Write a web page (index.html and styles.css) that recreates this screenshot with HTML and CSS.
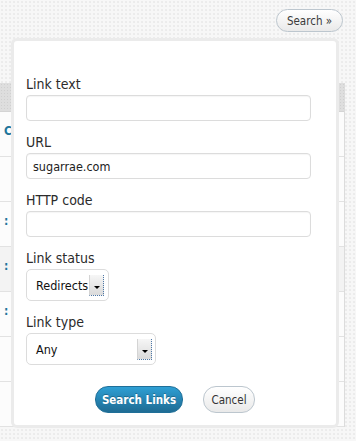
FILE: index.html
```html
<!DOCTYPE html>
<html>
<head>
<meta charset="utf-8">
<link rel="stylesheet" href="styles.css">
</head>
<body>
<div class="page">
  <div class="topbar">
    <button class="btn btn-light search-toggle" type="button">Search »</button>
  </div>
  <div class="links">
    <div class="links-head"></div>
    <div class="row"><span class="cell">C</span></div>
    <div class="row"><span class="cell"></span></div>
    <div class="row"><span class="cell">:</span></div>
    <div class="row row-alt"><span class="cell">: 2</span></div>
    <div class="row"><span class="cell">:</span></div>
    <div class="row"><span class="cell"></span></div>
    <div class="row"><span class="cell"></span></div>
  </div>

  <form class="popup">
    <div class="field">
      <label class="label">Link text</label>
      <input class="input" type="text" value="">
    </div>
    <div class="field">
      <label class="label">URL</label>
      <input class="input" type="text" value="sugarrae.com">
    </div>
    <div class="field">
      <label class="label">HTTP code</label>
      <input class="input" type="text" value="">
    </div>
    <div class="field">
      <label class="label">Link status</label>
      <div class="select select-status"><span class="select-text">Redirects</span><span class="arrow"><span class="tri"></span></span></div>
    </div>
    <div class="field field-last">
      <label class="label">Link type</label>
      <div class="select select-type"><span class="select-text">Any</span><span class="arrow"><span class="tri"></span></span></div>
    </div>
    <div class="actions">
      <button class="btn btn-primary" type="button">Search Links</button>
      <button class="btn btn-light btn-cancel" type="button">Cancel</button>
    </div>
  </form>
</div>
</body>
</html>
```

FILE: styles.css
```css
* { box-sizing: border-box; }

html, body {
  margin: 0;
  padding: 0;
}

body {
  width: 356px;
  height: 441px;
  overflow: hidden;
  font-family: "DejaVu Sans Condensed", "DejaVu Sans", sans-serif;
  font-stretch: condensed;
  color: #333;
  background-color: #f7f7f7;
  background-image: radial-gradient(circle, #e6e6e6 0.6px, transparent 0.9px);
  background-size: 4px 4px;
}

.page {
  position: relative;
  width: 356px;
  height: 441px;
}

.topbar {
  height: 83px;
  display: flex;
  justify-content: flex-end;
  align-items: flex-start;
  padding: 9px 13px 0 0;
}

.btn {
  font-family: "DejaVu Sans Condensed", "DejaVu Sans", sans-serif;
  font-stretch: condensed;
  font-size: 11.5px;
  border-radius: 13px;
  padding: 0;
  margin: 0;
  cursor: pointer;
  display: flex;
  align-items: center;
  justify-content: center;
}

.btn-light {
  color: #333;
  border: 1px solid #bcc6ce;
  background: linear-gradient(#ffffff, #f2f2f2 60%, #e9e9e9);
}

.search-toggle {
  width: 67px;
  height: 23px;
  border-radius: 12px;
  color: #3a3a3a;
}

.links {
  width: 345px;
  border-right: 1px solid #dcdcdc;
}

.links-head {
  height: 29px;
  background-color: #dedede;
  background-image: radial-gradient(circle, #d0d0d0 0.6px, transparent 0.9px);
  background-size: 3px 3px;
  border-bottom: 1px solid #d4d4d4;
}

.row {
  height: 45px;
  background: #fcfcfc;
  border-bottom: 1px solid #e2e2e2;
  padding: 8px 0 0 4px;
}

.row-alt {
  background: #f3f3f3;
}

.cell {
  font-size: 12px;
  font-weight: bold;
  color: #21759b;
}

.popup {
  position: absolute;
  left: 11px;
  top: 38px;
  width: 328px;
  margin: 0;
  background: #fff;
  border: 3px solid #ebebeb;
  border-radius: 6px;
  padding: 35px 12px 12px 12px;
}

.field {
  display: flex;
  flex-direction: column;
  align-items: flex-start;
  margin-bottom: 13px;
}

.field-last {
  margin-bottom: 0;
}

.label {
  font-size: 14px;
  line-height: 16px;
  color: #2b2b2b;
  margin-bottom: 3px;
}

.input {
  width: 285px;
  height: 26px;
  border: 1px solid #dcdcdc;
  border-radius: 4px;
  padding: 0 6px;
  font-family: "DejaVu Sans Condensed", "DejaVu Sans", sans-serif;
  font-stretch: condensed;
  font-size: 12.5px;
  color: #222;
  background: #fff;
  box-shadow: inset 0 1px 1px rgba(0,0,0,0.04);
  outline: none;
}

.select {
  height: 32px;
  border: 1px solid #dcdcdc;
  border-radius: 5px;
  display: flex;
  align-items: center;
  justify-content: space-between;
  padding: 0 5px 0 9px;
  font-size: 12.5px;
  color: #111;
  background: #fff;
}

.select-status { width: 83px; padding-right: 4px; }
.select-type { width: 130px; padding-right: 3px; }

.arrow {
  width: 15px;
  height: 21px;
  background: linear-gradient(#f6f6f6, #dadada);
  border-left: 1px solid #d4d4d4;
  border-right: 1px dotted #4d78a8;
  border-bottom: 1px dotted #4d78a8;
  display: flex;
  align-items: flex-end;
  justify-content: center;
  padding-bottom: 6px;
}

.tri {
  width: 0;
  height: 0;
  border-left: 3px solid transparent;
  border-right: 3px solid transparent;
  border-top: 3px solid #000;
}

.actions {
  display: flex;
  justify-content: center;
  gap: 20px;
  margin-top: 21px;
}

.btn-primary {
  width: 88px;
  height: 27px;
  border: 1px solid #1f6f98;
  background: linear-gradient(#2e9fd4, #2582b0 55%, #1f6c94);
  color: #fff;
  font-weight: bold;
  text-shadow: 0 -1px 0 rgba(0,0,0,0.25);
}

.btn-cancel {
  width: 52px;
  height: 27px;
}
```
